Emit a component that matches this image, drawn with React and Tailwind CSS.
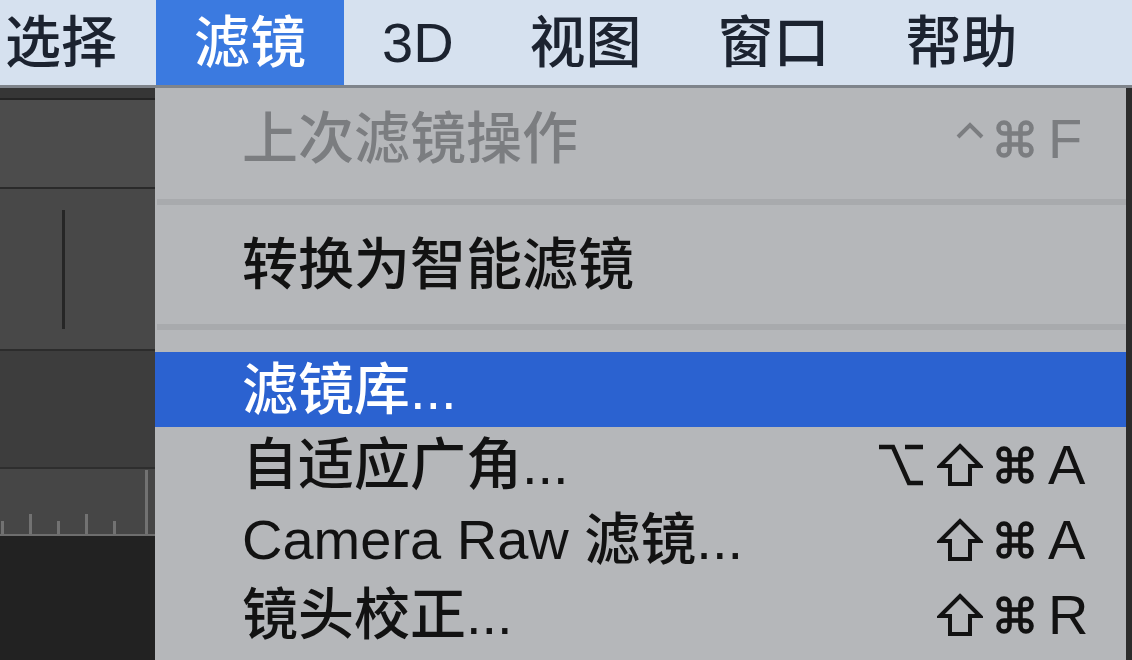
import React from 'react';

const FONT = { fontFamily: '"Liberation Sans", "Noto Sans CJK SC", sans-serif' };

const barItems = ['选择', '滤镜', '3D', '视图', '窗口', '帮助'];

// mac modifier key glyphs, drawn to match the menu's shapes
const Ctrl = () => (
  <svg width="30" height="44" viewBox="0 0 30 44" className="block">
    <polyline points="3,20 15,8 27,20" fill="none" stroke="currentColor" strokeWidth="4" strokeLinejoin="miter" />
  </svg>
);

const Opt = () => (
  <svg width="48" height="44" viewBox="0 0 48 44" className="block">
    <path d="M2 4h14l16 36h14M28 4h18" fill="none" stroke="currentColor" strokeWidth="4.5" />
  </svg>
);

const Shift = () => (
  <svg width="46" height="44" viewBox="0 0 46 44" className="block">
    <path d="M23 3L43 23H33V41H13V23H3Z" fill="none" stroke="currentColor" strokeWidth="4" strokeLinejoin="miter" />
  </svg>
);

const Cmd = () => (
  <svg width="44" height="44" viewBox="0 0 24 24" className="block">
    <path
      d="M15 6v12a3 3 0 1 0 3-3H6a3 3 0 1 0 3 3V6a3 3 0 1 0-3 3h12a3 3 0 1 0-3-3"
      fill="none"
      stroke="currentColor"
      strokeWidth="2.5"
    />
  </svg>
);

const glyphs = { ctrl: Ctrl, opt: Opt, shift: Shift, cmd: Cmd };

const Shortcut = ({ keys, letter }) => (
  <div className="flex items-center pr-[40px]">
    {keys.map((k) => {
      const G = glyphs[k];
      return (
        <span key={k} className={k === 'opt' ? 'mr-[12px]' : k === 'shift' ? 'mr-[10px]' : k === 'ctrl' ? 'mr-[8px]' : 'mr-[11px]'}>
          <G />
        </span>
      );
    })}
    <span className="w-[38px]">{letter}</span>
  </div>
);

const Row = ({ label, keys, letter, dim, active }) => (
  <div
    className={`h-[75px] flex items-center justify-between pl-[87px] ${
      active ? 'bg-[#2b62d0] text-white' : dim ? 'text-[#7b7d80]' : 'text-[#121212]'
    }`}
  >
    <span>{label}</span>
    {keys && <Shortcut keys={keys} letter={letter} />}
  </div>
);

const Separator = ({ h }) => (
  <div className={`flex items-center ${h}`}>
    <div className="h-[6px] w-full bg-[#a8aaad] ml-[2px]" />
  </div>
);

const Ruler = () => (
  <svg width="155" height="67" className="block">
    <rect width="155" height="67" fill="#464646" />
    <rect x="0" y="65" width="155" height="2" fill="#6e6e6e" />
    {[
      [2, 52],
      [30, 45],
      [58, 52],
      [86, 45],
      [114, 52],
      [146, 1],
    ].map(([x, y]) => (
      <rect key={x} x={x - 1} y={y} width="3" height={65 - y} fill="#727272" />
    ))}
  </svg>
);

export default function App() {
  return (
    <div style={FONT} className="w-[1132px] h-[660px] overflow-hidden flex flex-col text-[56px] leading-none font-medium">
      {/* menu bar */}
      <div className="h-[88px] shrink-0 flex bg-[#d6e1ef] border-b-[3px] border-[#7f848b] text-[#1c2330]">
        {barItems.map((t, i) => (
          <div
            key={t}
            className={`flex items-center ${i === 0 ? 'pl-[5px] pr-[39px]' : 'px-[38px]'} ${
              i === 1 ? 'bg-[#3b7ae0] text-white' : ''
            }`}
          >
            {t}
          </div>
        ))}
      </div>

      <div className="flex flex-1 min-h-0">
        {/* app panels behind the menu */}
        <div className="w-[155px] shrink-0 flex flex-col">
          <div className="h-[12px] bg-[#363636] border-b-2 border-[#242424]" />
          <div className="h-[89px] bg-[#4c4c4c] border-b-2 border-[#2a2a2a]" />
          <div className="h-[162px] bg-[#484848] border-b-2 border-[#2c2c2c]">
            <div className="ml-[62px] mt-[21px] w-[3px] h-[119px] bg-[#262626]" />
          </div>
          <div className="h-[118px] bg-[#3d3d3d] border-b-2 border-[#2e2e2e]" />
          <Ruler />
          <div className="flex-1 bg-[#222222]" />
        </div>

        {/* dropdown */}
        <div className="flex-1 bg-[#b5b7ba] pt-[13px]">
          <Row label="上次滤镜操作" keys={['ctrl', 'cmd']} letter="F" dim />
          <Separator h="h-[51px]" />
          <Row label="转换为智能滤镜" />
          <Separator h="h-[50px]" />
          <Row label="滤镜库..." active />
          <Row label="自适应广角..." keys={['opt', 'shift', 'cmd']} letter="A" />
          <Row label="Camera Raw 滤镜..." keys={['shift', 'cmd']} letter="A" />
          <Row label="镜头校正..." keys={['shift', 'cmd']} letter="R" />
        </div>

        <div className="w-[6px] shrink-0 bg-[#2c2c2c]" />
      </div>
    </div>
  );
}
